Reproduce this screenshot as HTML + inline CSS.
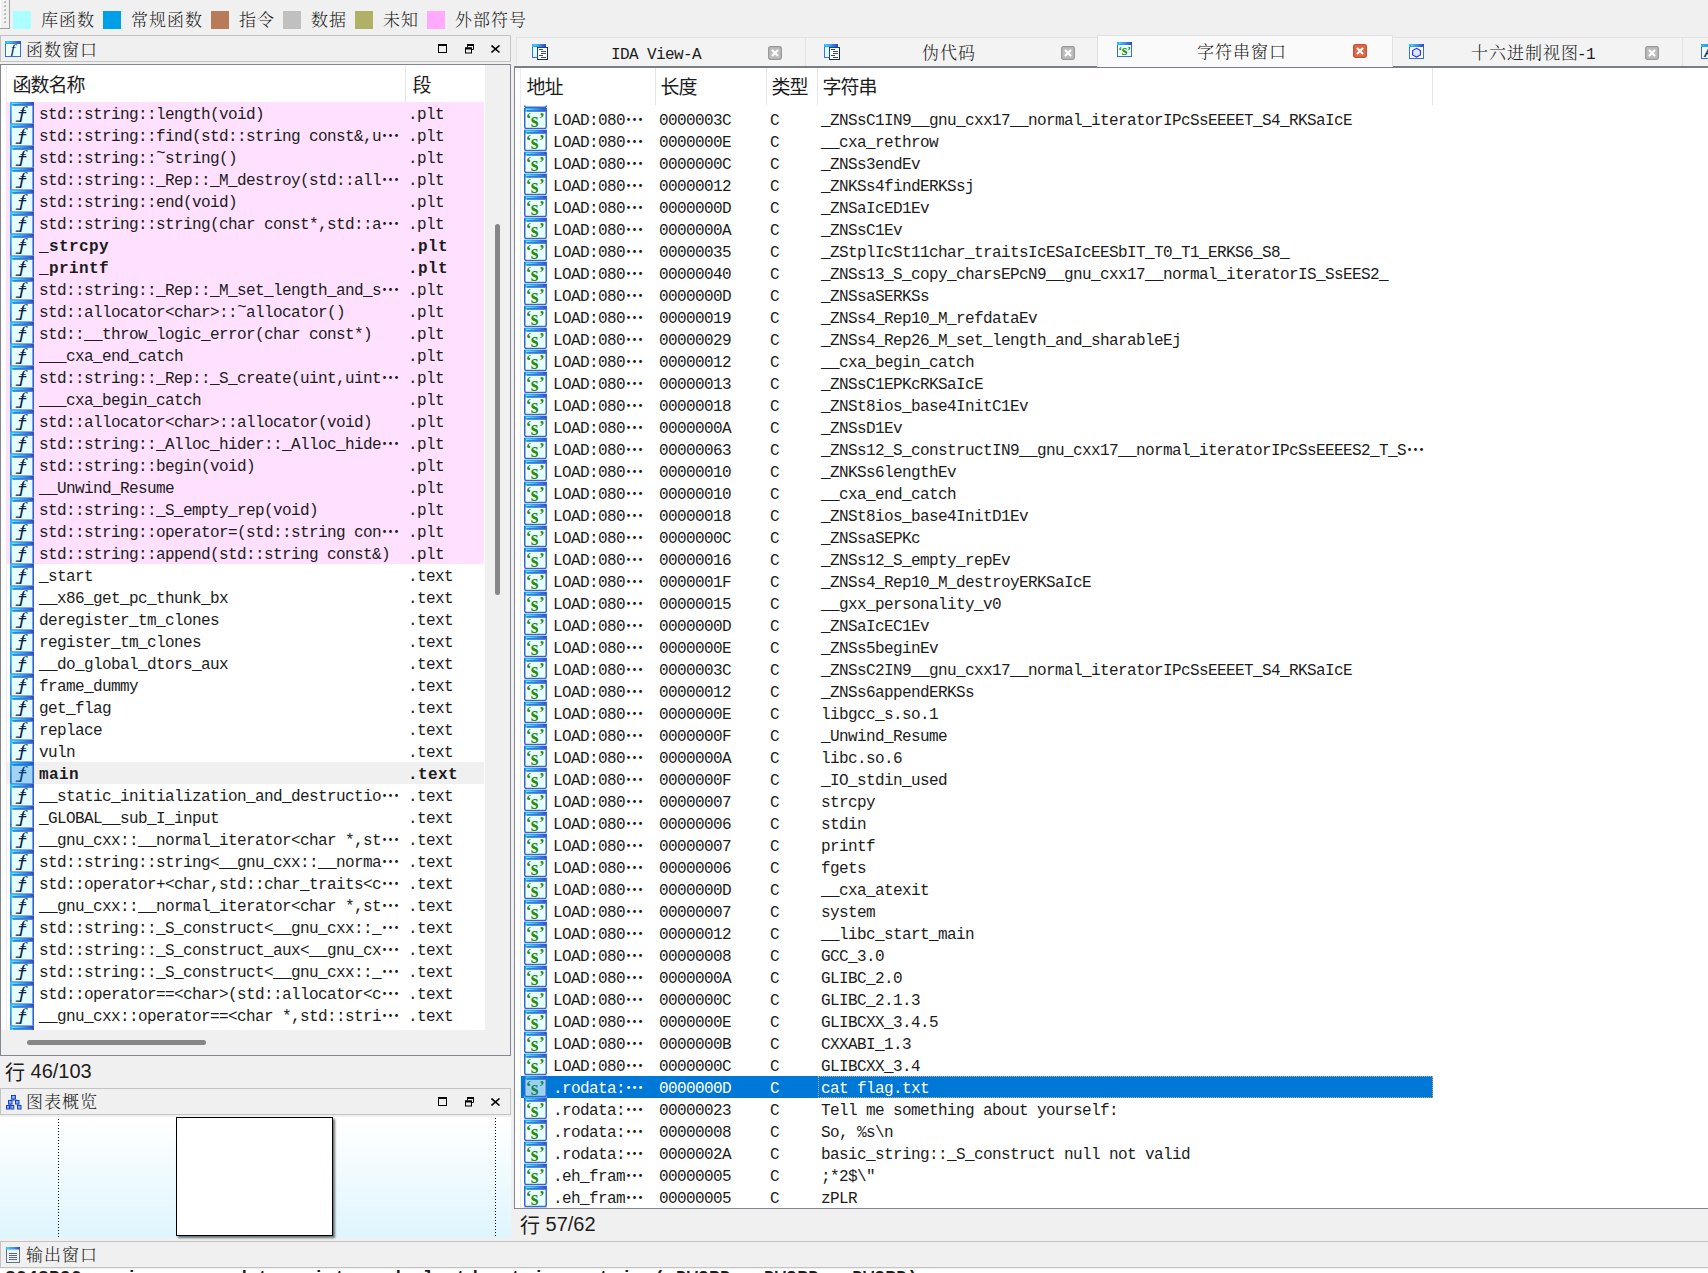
<!DOCTYPE html>
<html lang="zh-CN"><head><meta charset="utf-8"><title>IDA</title>
<style>
*{box-sizing:border-box;margin:0;padding:0}
html,body{width:1708px;height:1273px;overflow:hidden;background:#f0f0f0}
body{position:relative;font-family:"Liberation Mono","Noto Sans CJK SC",monospace;color:#1c1c1c;font-size:16px;letter-spacing:-0.6px}
.abs,body>div,body>span{position:absolute}
.sf{letter-spacing:1px;font-family:"Liberation Serif","Noto Serif CJK SC",serif;font-size:17px;line-height:22px;white-space:nowrap;font-weight:300}
.ss2{letter-spacing:0;font-family:"Liberation Sans","Noto Sans CJK SC",sans-serif;font-size:18px;line-height:24px;white-space:nowrap}
.mono{font-family:"Liberation Mono","Noto Sans CJK SC",monospace;font-size:16px;letter-spacing:-0.6px;white-space:nowrap}
i.el{font-style:normal;font-weight:bold;letter-spacing:0;font-family:"Noto Sans CJK SC",sans-serif;font-size:18px;line-height:0;position:relative;top:0.5px;left:0.5px}
/* legend */
.sw{position:absolute;top:11px;width:18px;height:18px}
.lg{position:absolute;top:10px}
/* dock titles */
.dock{position:absolute;left:0;width:511px;height:27px;border:1px solid #c3c3c3;background:#f0f0f0}
.dock .sf{position:absolute;left:25px;top:4px}
.dock svg{position:absolute}
/* left list */
#lpanel{left:0;top:64px;width:511px;height:992px;border:1px solid #828790;background:#f0f0f0}
#lwhite{left:1px;top:65px;width:484px;height:965px;background:#fff}
#flist,#slist{position:absolute;left:0;top:0}
.fr{position:absolute;left:7px;width:477px;height:22px;line-height:22px;white-space:nowrap}
.fr.pk{background:#ffe1ff}
.fr.cur{background:#f0f0f0}
.fr.b{font-weight:bold;letter-spacing:0.4px}
.fi{position:absolute;left:3px;top:0;width:24px;height:22px}
.fn{position:absolute;left:32px;top:2px}
.fs{position:absolute;left:401px;top:2px}
.hsep{position:absolute;width:1px;background:#e5e5e5}
/* right list */
#rpanel{left:514px;top:66px;width:1200px;height:1143px;border:1px solid #828790;border-top:2px solid #7a7f87;background:#fff}
.sr{position:absolute;left:521px;width:912px;height:22px;line-height:22px;white-space:nowrap}
.sr.sel{background:#0078d7;color:#fff}
.sr.sel:after{content:"";box-sizing:border-box;position:absolute;left:297px;top:0;width:615px;height:22px;border:1px dotted #f0b27c;opacity:.85}
.si{position:absolute;left:3px;top:0;width:24px;height:22px}
.sa{position:absolute;left:32px;top:2px}
.sl{position:absolute;left:138px;top:2px}
.st{position:absolute;left:249px;top:2px}
.ss{position:absolute;left:300px;top:2px}
/* tabs */
.tab{position:absolute;top:37px;height:29px;background:#f3f3f3;border:1px solid #e2e2e2;border-bottom:none}
.tab.act{top:35px;height:32px;background:#fafafa;border-color:#e0e0e0}
.tab .sf{position:absolute;top:5px}
.tab svg{position:absolute}

.ss2.hd{font-size:19px;letter-spacing:-1px}
i.tl{font-style:normal;position:relative;top:-5px}

</style></head><body>
<svg width="0" height="0" style="position:absolute">
<defs>
<linearGradient id="gtb" x1="0" y1="0" x2="1" y2="0"><stop offset="0" stop-color="#22c2fa"/><stop offset="0.550" stop-color="#3a8ce0"/><stop offset="1" stop-color="#3444c6"/></linearGradient>
<linearGradient id="gth" x1="0" y1="0" x2="1" y2="0"><stop offset="0" stop-color="#62f2ff"/><stop offset="0.600" stop-color="#3c96e2"/><stop offset="1" stop-color="#3258cc"/></linearGradient>
<linearGradient id="glb" x1="0" y1="0" x2="0" y2="1"><stop offset="0" stop-color="#22b8f6"/><stop offset="1" stop-color="#3270d8"/></linearGradient>
<g id="ficon">
<rect x="0" y="0" width="24" height="22" fill="#fff"/>
<rect x="2.500" y="4.500" width="19.500" height="16.500" fill="#e4feff"/>
<rect x="0" y="0" width="1.700" height="22" fill="url(#glb)"/>
<rect x="22.400" y="0" width="1.600" height="22" fill="#3262d2"/>
<rect x="0" y="0" width="24" height="3.600" fill="url(#gtb)"/>
<rect x="2" y="0.800" width="20" height="1.200" fill="url(#gth)"/>
<rect x="3" y="2.300" width="19.500" height="1.300" fill="#2b6fe0"/>
<rect x="0" y="21.200" width="24" height="0.800" fill="#6a94e2"/>
<text transform="translate(9.300,16) scale(1.25,1)" font-family="Liberation Serif,serif" font-style="italic" font-weight="normal" letter-spacing="0" font-size="17" fill="#0e1e48">f</text>
<path d="M9.300 10.700h6.600M6.300 19.200h3.200" stroke="#0e1e48" stroke-width="1.300" stroke-linecap="round" fill="none"/>
</g>
<g id="sicon">
<rect x="0" y="0" width="23" height="21" fill="#fff"/>
<rect x="2.500" y="4.500" width="18" height="14.500" fill="#e6ffff"/>
<rect x="0" y="0" width="23" height="3.600" fill="url(#gtb)"/>
<rect x="2" y="0.800" width="19" height="1.200" fill="url(#gth)"/>
<rect x="3" y="2.300" width="18" height="1.300" fill="#2b6fe0"/>
<path d="M0.750 0v19a1.500 1.500 0 0 0 1.500 1.500h18.500a1.500 1.500 0 0 0 1.500 -1.500v-19" fill="none" stroke="#3268d2" stroke-width="1.500"/>
<rect x="0" y="21.200" width="23" height="0.800" fill="#b4c6ee"/>
<g font-family="Liberation Serif,serif" font-weight="bold" fill="#2f8a08"><text x="1.800" y="16.300" font-size="17">‘</text><text x="6.800" y="18.700" font-size="20">s</text><text x="15" y="16.300" font-size="17">’</text></g>
</g>
<g id="btnmax"><rect x="0.500" y="1" width="8" height="7.500" fill="none" stroke="#000" stroke-width="1"/><rect x="0" y="0" width="9" height="2" fill="#000"/></g>
<g id="btnfloat"><path d="M2.5 3.5v-3h6v5h-2.5" fill="none" stroke="#000" stroke-width="1"/><rect x="2" y="0" width="7" height="2" fill="#000"/><rect x="0.5" y="4" width="6" height="5" fill="#f0f0f0" stroke="#000" stroke-width="1"/><rect x="0" y="3.5" width="7" height="2" fill="#000"/></g>
<g id="btnx"><path d="M0.5 0.5l8 7M8.5 0.5l-8 7" stroke="#000" stroke-width="1.6" fill="none"/></g>
<g id="tabx"><rect x="0.650" y="0.650" width="12.700" height="12.700" rx="1.800" fill="#bcbcbc" stroke="#999" stroke-width="1.300"/><path d="M4 4l6 6M10 4l-6 6" stroke="#fff" stroke-width="2.100"/></g>
<g id="tabxr"><rect x="0.650" y="0.650" width="12.700" height="12.700" rx="1.800" fill="#e0694a" stroke="#c9502f" stroke-width="1.300"/><path d="M4 4l6 6M10 4l-6 6" stroke="#fff" stroke-width="2.100"/></g>
<linearGradient id="gbody" x1="0" y1="0" x2="1" y2="1"><stop offset="0" stop-color="#f4ffff"/><stop offset="1" stop-color="#cfeeff"/></linearGradient>
<g id="docicon"><rect x="0.500" y="0.500" width="13" height="13" fill="url(#gbody)" stroke="#3476dc"/><rect x="0" y="0" width="14" height="3" fill="url(#gtb)"/><rect x="1.500" y="0.600" width="11" height="1" fill="url(#gth)"/><rect x="5.500" y="3.500" width="10" height="12" fill="#fff" stroke="#14478c"/><path d="M15.500 3.500v12h-10" fill="none" stroke="#083068"/><path d="M7 5.500h4M9 7.500h5M9 9.500h5M7 11.500h4M9 13.500h5" stroke="#444c56" stroke-width="1"/></g>
<g id="hexicon"><rect x="0.500" y="0.500" width="14" height="14" fill="#fff" stroke="#3470da"/><rect x="0" y="0" width="15" height="3" fill="url(#gtb)"/><rect x="1.500" y="0.600" width="12" height="1" fill="url(#gth)"/><path d="M7.500 4.300l3.900 2.200v4.400l-3.900 2.200l-3.900 -2.200v-4.400z" fill="#dce9ff" stroke="#2a2cff" stroke-width="1.100"/></g>
<g id="smini"><rect x="0.500" y="0.500" width="14" height="14" fill="#fff" stroke="#3470da"/><rect x="2" y="4" width="11" height="9.500" fill="#e6ffff"/><rect x="0" y="0" width="15" height="3" fill="url(#gtb)"/><rect x="1.500" y="0.600" width="12" height="1" fill="url(#gth)"/><g font-family="Liberation Serif,serif" font-weight="bold" fill="#2f8a08" letter-spacing="0"><text x="1.600" y="12" font-size="11">‘</text><text x="4.700" y="12.800" font-size="14.500">s</text><text x="10.300" y="12" font-size="11">’</text></g></g>
</defs>
</svg>
<!-- toolbar grip + legend -->
<div style="left:0;top:0;width:1px;height:28px;background:#fff"></div>
<div style="left:3px;top:0;width:2px;height:23px;background:repeating-linear-gradient(#fcfcfc 0 2px,#f0f0f0 2px 4px)"></div>
<div style="left:4px;top:1px;width:2px;height:22px;background:repeating-linear-gradient(#bcbcbc 0 2px,transparent 2px 4px)"></div>
<div style="left:0;top:28px;width:10px;height:1px;background:#a0a0a0"></div>
<div style="left:9px;top:0;width:1px;height:29px;background:#a0a0a0"></div>
<div class="sw" style="left:13px;background:#aaffff"></div><span class="sf lg" style="left:41px">库函数</span>
<div class="sw" style="left:103px;background:#00a0e8"></div><span class="sf lg" style="left:131px">常规函数</span>
<div class="sw" style="left:211px;background:#b97a57"></div><span class="sf lg" style="left:239px">指令</span>
<div class="sw" style="left:283px;background:#c0c0c0"></div><span class="sf lg" style="left:311px">数据</span>
<div class="sw" style="left:355px;background:#b0b066"></div><span class="sf lg" style="left:383px">未知</span>
<div class="sw" style="left:427px;background:#ffaaff"></div><span class="sf lg" style="left:455px">外部符号</span>

<!-- functions window title -->
<div class="dock" style="top:35px">
<svg width="16" height="16" style="left:4px;top:5px"><rect x="0.500" y="0.500" width="15" height="15" fill="#fff" stroke="#3470da"/><rect x="2" y="4" width="12" height="10.500" fill="#e6ffff"/><rect x="0" y="0" width="16" height="3" fill="url(#gtb)"/><rect x="1.500" y="0.600" width="13" height="1" fill="url(#gth)"/><text transform="translate(5.800,11.700) scale(1.3,1)" font-family="Liberation Serif,serif" font-style="italic" font-size="12.500" fill="#0e1e48">f</text></svg>
<span class="sf">函数窗口</span>
<svg width="10" height="10" style="left:437px;top:8px"><use href="#btnmax"/></svg>
<svg width="10" height="10" style="left:464px;top:8px"><use href="#btnfloat"/></svg>
<svg width="10" height="10" style="left:490px;top:9px"><use href="#btnx"/></svg>
</div>

<!-- functions list frame -->
<div id="lpanel"></div>
<div id="lwhite"></div>
<span class="ss2 hd" style="left:12.500px;top:74px">函数名称</span>
<span class="ss2 hd" style="left:412.500px;top:74px">段</span>
<div class="hsep" style="left:405px;top:66px;height:36px"></div>
<div class="hsep" style="left:6px;top:65px;height:965px;background:#ebebeb"></div>

<!-- tabs -->
<div class="tab" style="left:516px;width:290px"><svg width="17" height="17" style="left:15px;top:6px"><use href="#docicon"/></svg><span class="sf" style="left:94px;top:6px;font-family:'Liberation Mono',monospace;font-size:16px;letter-spacing:-0.600px;font-weight:400">IDA View-A</span><svg width="14" height="14" style="left:251px;top:8px"><use href="#tabx"/></svg></div>
<div class="tab" style="left:806px;width:292px;border-left:none"><svg width="17" height="17" style="left:18px;top:6px"><use href="#docicon"/></svg><span class="sf" style="left:116px">伪代码</span><svg width="14" height="14" style="left:255px;top:8px"><use href="#tabx"/></svg></div>
<div class="tab" style="left:1393px;width:290px;border-left:none"><svg width="15" height="15" style="left:16px;top:6px"><use href="#hexicon"/></svg><span class="sf" style="left:78px">十六进制视图<span style="font-family:'Liberation Mono',monospace;font-size:16px;letter-spacing:-0.600px;margin-left:-2px;font-weight:400">-1</span></span><svg width="14" height="14" style="left:252px;top:8px"><use href="#tabx"/></svg></div>
<div class="tab" style="left:1683px;width:30px;border-left:none"><svg width="15" height="15" style="left:18px;top:6px"><rect x="0.500" y="0.500" width="14" height="14" fill="#eef6ff" stroke="#3470da"/><rect x="0" y="0" width="15" height="3" fill="url(#gtb)"/><text x="3" y="13" font-family="Liberation Sans,sans-serif" font-weight="bold" font-style="italic" font-size="12" fill="#0a2a5a">A</text></svg></div>

<!-- strings panel frame -->
<div id="rpanel"></div>
<div class="tab act" style="left:1097px;width:296px"><svg width="15" height="15" style="left:19px;top:6px"><use href="#smini"/></svg><span class="sf" style="left:99px;top:6px">字符串窗口</span><svg width="14" height="14" style="left:255px;top:8px"><use href="#tabxr"/></svg></div>
<svg id="ears" class="abs" width="23" height="3" style="left:524px;top:104.500px"><path d="M0.750 0.500v0.500a1.200 1.200 0 0 0 1.200 1.200h19.100a1.200 1.200 0 0 0 1.200 -1.200v-0.500" fill="none" stroke="#3268d2" stroke-width="1.500"/></svg>
<span class="ss2 hd" style="left:526.5px;top:76px">地址</span>
<span class="ss2 hd" style="left:660.5px;top:76px">长度</span>
<span class="ss2 hd" style="left:771.5px;top:76px">类型</span>
<span class="ss2 hd" style="left:822.5px;top:76px">字符串</span>
<div class="hsep" style="left:520px;top:68px;height:1140px;background:#ebebeb"></div>
<div class="hsep" style="left:655px;top:68px;height:37px"></div>
<div class="hsep" style="left:766px;top:68px;height:37px"></div>
<div class="hsep" style="left:817px;top:68px;height:37px"></div>
<div class="hsep" style="left:1432px;top:68px;height:37px"></div>
<div id="flist">
<div class="fr pk" style="top:102px"><span class="fi"><svg width="24" height="22"><use href="#ficon"/></svg></span><span class="fn">std::string::length(void)</span><span class="fs">.plt</span></div>
<div class="fr pk" style="top:124px"><span class="fi"><svg width="24" height="22"><use href="#ficon"/></svg></span><span class="fn">std::string::find(std::string const&amp;,u<i class="el">…</i></span><span class="fs">.plt</span></div>
<div class="fr pk" style="top:146px"><span class="fi"><svg width="24" height="22"><use href="#ficon"/></svg></span><span class="fn">std::string::<i class="tl">~</i>string()</span><span class="fs">.plt</span></div>
<div class="fr pk" style="top:168px"><span class="fi"><svg width="24" height="22"><use href="#ficon"/></svg></span><span class="fn">std::string::_Rep::_M_destroy(std::all<i class="el">…</i></span><span class="fs">.plt</span></div>
<div class="fr pk" style="top:190px"><span class="fi"><svg width="24" height="22"><use href="#ficon"/></svg></span><span class="fn">std::string::end(void)</span><span class="fs">.plt</span></div>
<div class="fr pk" style="top:212px"><span class="fi"><svg width="24" height="22"><use href="#ficon"/></svg></span><span class="fn">std::string::string(char const*,std::a<i class="el">…</i></span><span class="fs">.plt</span></div>
<div class="fr pk b" style="top:234px"><span class="fi"><svg width="24" height="22"><use href="#ficon"/></svg></span><span class="fn">_strcpy</span><span class="fs">.plt</span></div>
<div class="fr pk b" style="top:256px"><span class="fi"><svg width="24" height="22"><use href="#ficon"/></svg></span><span class="fn">_printf</span><span class="fs">.plt</span></div>
<div class="fr pk" style="top:278px"><span class="fi"><svg width="24" height="22"><use href="#ficon"/></svg></span><span class="fn">std::string::_Rep::_M_set_length_and_s<i class="el">…</i></span><span class="fs">.plt</span></div>
<div class="fr pk" style="top:300px"><span class="fi"><svg width="24" height="22"><use href="#ficon"/></svg></span><span class="fn">std::allocator&lt;char&gt;::<i class="tl">~</i>allocator()</span><span class="fs">.plt</span></div>
<div class="fr pk" style="top:322px"><span class="fi"><svg width="24" height="22"><use href="#ficon"/></svg></span><span class="fn">std::__throw_logic_error(char const*)</span><span class="fs">.plt</span></div>
<div class="fr pk" style="top:344px"><span class="fi"><svg width="24" height="22"><use href="#ficon"/></svg></span><span class="fn">___cxa_end_catch</span><span class="fs">.plt</span></div>
<div class="fr pk" style="top:366px"><span class="fi"><svg width="24" height="22"><use href="#ficon"/></svg></span><span class="fn">std::string::_Rep::_S_create(uint,uint<i class="el">…</i></span><span class="fs">.plt</span></div>
<div class="fr pk" style="top:388px"><span class="fi"><svg width="24" height="22"><use href="#ficon"/></svg></span><span class="fn">___cxa_begin_catch</span><span class="fs">.plt</span></div>
<div class="fr pk" style="top:410px"><span class="fi"><svg width="24" height="22"><use href="#ficon"/></svg></span><span class="fn">std::allocator&lt;char&gt;::allocator(void)</span><span class="fs">.plt</span></div>
<div class="fr pk" style="top:432px"><span class="fi"><svg width="24" height="22"><use href="#ficon"/></svg></span><span class="fn">std::string::_Alloc_hider::_Alloc_hide<i class="el">…</i></span><span class="fs">.plt</span></div>
<div class="fr pk" style="top:454px"><span class="fi"><svg width="24" height="22"><use href="#ficon"/></svg></span><span class="fn">std::string::begin(void)</span><span class="fs">.plt</span></div>
<div class="fr pk" style="top:476px"><span class="fi"><svg width="24" height="22"><use href="#ficon"/></svg></span><span class="fn">__Unwind_Resume</span><span class="fs">.plt</span></div>
<div class="fr pk" style="top:498px"><span class="fi"><svg width="24" height="22"><use href="#ficon"/></svg></span><span class="fn">std::string::_S_empty_rep(void)</span><span class="fs">.plt</span></div>
<div class="fr pk" style="top:520px"><span class="fi"><svg width="24" height="22"><use href="#ficon"/></svg></span><span class="fn">std::string::operator=(std::string con<i class="el">…</i></span><span class="fs">.plt</span></div>
<div class="fr pk" style="top:542px"><span class="fi"><svg width="24" height="22"><use href="#ficon"/></svg></span><span class="fn">std::string::append(std::string const&amp;)</span><span class="fs">.plt</span></div>
<div class="fr" style="top:564px"><span class="fi"><svg width="24" height="22"><use href="#ficon"/></svg></span><span class="fn">_start</span><span class="fs">.text</span></div>
<div class="fr" style="top:586px"><span class="fi"><svg width="24" height="22"><use href="#ficon"/></svg></span><span class="fn">__x86_get_pc_thunk_bx</span><span class="fs">.text</span></div>
<div class="fr" style="top:608px"><span class="fi"><svg width="24" height="22"><use href="#ficon"/></svg></span><span class="fn">deregister_tm_clones</span><span class="fs">.text</span></div>
<div class="fr" style="top:630px"><span class="fi"><svg width="24" height="22"><use href="#ficon"/></svg></span><span class="fn">register_tm_clones</span><span class="fs">.text</span></div>
<div class="fr" style="top:652px"><span class="fi"><svg width="24" height="22"><use href="#ficon"/></svg></span><span class="fn">__do_global_dtors_aux</span><span class="fs">.text</span></div>
<div class="fr" style="top:674px"><span class="fi"><svg width="24" height="22"><use href="#ficon"/></svg></span><span class="fn">frame_dummy</span><span class="fs">.text</span></div>
<div class="fr" style="top:696px"><span class="fi"><svg width="24" height="22"><use href="#ficon"/></svg></span><span class="fn">get_flag</span><span class="fs">.text</span></div>
<div class="fr" style="top:718px"><span class="fi"><svg width="24" height="22"><use href="#ficon"/></svg></span><span class="fn">replace</span><span class="fs">.text</span></div>
<div class="fr" style="top:740px"><span class="fi"><svg width="24" height="22"><use href="#ficon"/></svg></span><span class="fn">vuln</span><span class="fs">.text</span></div>
<div class="fr b cur" style="top:762px"><span class="fi"><svg width="24" height="22"><use href="#ficon"/><rect width="24" height="22" fill="#0078d7" fill-opacity=".3"/></svg></span><span class="fn">main</span><span class="fs">.text</span></div>
<div class="fr" style="top:784px"><span class="fi"><svg width="24" height="22"><use href="#ficon"/></svg></span><span class="fn">__static_initialization_and_destructio<i class="el">…</i></span><span class="fs">.text</span></div>
<div class="fr" style="top:806px"><span class="fi"><svg width="24" height="22"><use href="#ficon"/></svg></span><span class="fn">_GLOBAL__sub_I_input</span><span class="fs">.text</span></div>
<div class="fr" style="top:828px"><span class="fi"><svg width="24" height="22"><use href="#ficon"/></svg></span><span class="fn">__gnu_cxx::__normal_iterator&lt;char *,st<i class="el">…</i></span><span class="fs">.text</span></div>
<div class="fr" style="top:850px"><span class="fi"><svg width="24" height="22"><use href="#ficon"/></svg></span><span class="fn">std::string::string&lt;__gnu_cxx::__norma<i class="el">…</i></span><span class="fs">.text</span></div>
<div class="fr" style="top:872px"><span class="fi"><svg width="24" height="22"><use href="#ficon"/></svg></span><span class="fn">std::operator+&lt;char,std::char_traits&lt;c<i class="el">…</i></span><span class="fs">.text</span></div>
<div class="fr" style="top:894px"><span class="fi"><svg width="24" height="22"><use href="#ficon"/></svg></span><span class="fn">__gnu_cxx::__normal_iterator&lt;char *,st<i class="el">…</i></span><span class="fs">.text</span></div>
<div class="fr" style="top:916px"><span class="fi"><svg width="24" height="22"><use href="#ficon"/></svg></span><span class="fn">std::string::_S_construct&lt;__gnu_cxx::_<i class="el">…</i></span><span class="fs">.text</span></div>
<div class="fr" style="top:938px"><span class="fi"><svg width="24" height="22"><use href="#ficon"/></svg></span><span class="fn">std::string::_S_construct_aux&lt;__gnu_cx<i class="el">…</i></span><span class="fs">.text</span></div>
<div class="fr" style="top:960px"><span class="fi"><svg width="24" height="22"><use href="#ficon"/></svg></span><span class="fn">std::string::_S_construct&lt;__gnu_cxx::_<i class="el">…</i></span><span class="fs">.text</span></div>
<div class="fr" style="top:982px"><span class="fi"><svg width="24" height="22"><use href="#ficon"/></svg></span><span class="fn">std::operator==&lt;char&gt;(std::allocator&lt;c<i class="el">…</i></span><span class="fs">.text</span></div>
<div class="fr" style="top:1004px"><span class="fi"><svg width="24" height="22"><use href="#ficon"/></svg></span><span class="fn">__gnu_cxx::operator==&lt;char *,std::stri<i class="el">…</i></span><span class="fs">.text</span></div>
</div>
<div id="slist">
<div class="sr" style="top:108px"><span class="si"><svg width="24" height="22"><use href="#sicon"/></svg></span><span class="sa">LOAD:080<i class="el">…</i></span><span class="sl">0000003C</span><span class="st">C</span><span class="ss">_ZNSsC1IN9__gnu_cxx17__normal_iteratorIPcSsEEEET_S4_RKSaIcE</span></div>
<div class="sr" style="top:130px"><span class="si"><svg width="24" height="22"><use href="#sicon"/></svg></span><span class="sa">LOAD:080<i class="el">…</i></span><span class="sl">0000000E</span><span class="st">C</span><span class="ss">__cxa_rethrow</span></div>
<div class="sr" style="top:152px"><span class="si"><svg width="24" height="22"><use href="#sicon"/></svg></span><span class="sa">LOAD:080<i class="el">…</i></span><span class="sl">0000000C</span><span class="st">C</span><span class="ss">_ZNSs3endEv</span></div>
<div class="sr" style="top:174px"><span class="si"><svg width="24" height="22"><use href="#sicon"/></svg></span><span class="sa">LOAD:080<i class="el">…</i></span><span class="sl">00000012</span><span class="st">C</span><span class="ss">_ZNKSs4findERKSsj</span></div>
<div class="sr" style="top:196px"><span class="si"><svg width="24" height="22"><use href="#sicon"/></svg></span><span class="sa">LOAD:080<i class="el">…</i></span><span class="sl">0000000D</span><span class="st">C</span><span class="ss">_ZNSaIcED1Ev</span></div>
<div class="sr" style="top:218px"><span class="si"><svg width="24" height="22"><use href="#sicon"/></svg></span><span class="sa">LOAD:080<i class="el">…</i></span><span class="sl">0000000A</span><span class="st">C</span><span class="ss">_ZNSsC1Ev</span></div>
<div class="sr" style="top:240px"><span class="si"><svg width="24" height="22"><use href="#sicon"/></svg></span><span class="sa">LOAD:080<i class="el">…</i></span><span class="sl">00000035</span><span class="st">C</span><span class="ss">_ZStplIcSt11char_traitsIcESaIcEESbIT_T0_T1_ERKS6_S8_</span></div>
<div class="sr" style="top:262px"><span class="si"><svg width="24" height="22"><use href="#sicon"/></svg></span><span class="sa">LOAD:080<i class="el">…</i></span><span class="sl">00000040</span><span class="st">C</span><span class="ss">_ZNSs13_S_copy_charsEPcN9__gnu_cxx17__normal_iteratorIS_SsEES2_</span></div>
<div class="sr" style="top:284px"><span class="si"><svg width="24" height="22"><use href="#sicon"/></svg></span><span class="sa">LOAD:080<i class="el">…</i></span><span class="sl">0000000D</span><span class="st">C</span><span class="ss">_ZNSsaSERKSs</span></div>
<div class="sr" style="top:306px"><span class="si"><svg width="24" height="22"><use href="#sicon"/></svg></span><span class="sa">LOAD:080<i class="el">…</i></span><span class="sl">00000019</span><span class="st">C</span><span class="ss">_ZNSs4_Rep10_M_refdataEv</span></div>
<div class="sr" style="top:328px"><span class="si"><svg width="24" height="22"><use href="#sicon"/></svg></span><span class="sa">LOAD:080<i class="el">…</i></span><span class="sl">00000029</span><span class="st">C</span><span class="ss">_ZNSs4_Rep26_M_set_length_and_sharableEj</span></div>
<div class="sr" style="top:350px"><span class="si"><svg width="24" height="22"><use href="#sicon"/></svg></span><span class="sa">LOAD:080<i class="el">…</i></span><span class="sl">00000012</span><span class="st">C</span><span class="ss">__cxa_begin_catch</span></div>
<div class="sr" style="top:372px"><span class="si"><svg width="24" height="22"><use href="#sicon"/></svg></span><span class="sa">LOAD:080<i class="el">…</i></span><span class="sl">00000013</span><span class="st">C</span><span class="ss">_ZNSsC1EPKcRKSaIcE</span></div>
<div class="sr" style="top:394px"><span class="si"><svg width="24" height="22"><use href="#sicon"/></svg></span><span class="sa">LOAD:080<i class="el">…</i></span><span class="sl">00000018</span><span class="st">C</span><span class="ss">_ZNSt8ios_base4InitC1Ev</span></div>
<div class="sr" style="top:416px"><span class="si"><svg width="24" height="22"><use href="#sicon"/></svg></span><span class="sa">LOAD:080<i class="el">…</i></span><span class="sl">0000000A</span><span class="st">C</span><span class="ss">_ZNSsD1Ev</span></div>
<div class="sr" style="top:438px"><span class="si"><svg width="24" height="22"><use href="#sicon"/></svg></span><span class="sa">LOAD:080<i class="el">…</i></span><span class="sl">00000063</span><span class="st">C</span><span class="ss">_ZNSs12_S_constructIN9__gnu_cxx17__normal_iteratorIPcSsEEEES2_T_S<i class="el">…</i></span></div>
<div class="sr" style="top:460px"><span class="si"><svg width="24" height="22"><use href="#sicon"/></svg></span><span class="sa">LOAD:080<i class="el">…</i></span><span class="sl">00000010</span><span class="st">C</span><span class="ss">_ZNKSs6lengthEv</span></div>
<div class="sr" style="top:482px"><span class="si"><svg width="24" height="22"><use href="#sicon"/></svg></span><span class="sa">LOAD:080<i class="el">…</i></span><span class="sl">00000010</span><span class="st">C</span><span class="ss">__cxa_end_catch</span></div>
<div class="sr" style="top:504px"><span class="si"><svg width="24" height="22"><use href="#sicon"/></svg></span><span class="sa">LOAD:080<i class="el">…</i></span><span class="sl">00000018</span><span class="st">C</span><span class="ss">_ZNSt8ios_base4InitD1Ev</span></div>
<div class="sr" style="top:526px"><span class="si"><svg width="24" height="22"><use href="#sicon"/></svg></span><span class="sa">LOAD:080<i class="el">…</i></span><span class="sl">0000000C</span><span class="st">C</span><span class="ss">_ZNSsaSEPKc</span></div>
<div class="sr" style="top:548px"><span class="si"><svg width="24" height="22"><use href="#sicon"/></svg></span><span class="sa">LOAD:080<i class="el">…</i></span><span class="sl">00000016</span><span class="st">C</span><span class="ss">_ZNSs12_S_empty_repEv</span></div>
<div class="sr" style="top:570px"><span class="si"><svg width="24" height="22"><use href="#sicon"/></svg></span><span class="sa">LOAD:080<i class="el">…</i></span><span class="sl">0000001F</span><span class="st">C</span><span class="ss">_ZNSs4_Rep10_M_destroyERKSaIcE</span></div>
<div class="sr" style="top:592px"><span class="si"><svg width="24" height="22"><use href="#sicon"/></svg></span><span class="sa">LOAD:080<i class="el">…</i></span><span class="sl">00000015</span><span class="st">C</span><span class="ss">__gxx_personality_v0</span></div>
<div class="sr" style="top:614px"><span class="si"><svg width="24" height="22"><use href="#sicon"/></svg></span><span class="sa">LOAD:080<i class="el">…</i></span><span class="sl">0000000D</span><span class="st">C</span><span class="ss">_ZNSaIcEC1Ev</span></div>
<div class="sr" style="top:636px"><span class="si"><svg width="24" height="22"><use href="#sicon"/></svg></span><span class="sa">LOAD:080<i class="el">…</i></span><span class="sl">0000000E</span><span class="st">C</span><span class="ss">_ZNSs5beginEv</span></div>
<div class="sr" style="top:658px"><span class="si"><svg width="24" height="22"><use href="#sicon"/></svg></span><span class="sa">LOAD:080<i class="el">…</i></span><span class="sl">0000003C</span><span class="st">C</span><span class="ss">_ZNSsC2IN9__gnu_cxx17__normal_iteratorIPcSsEEEET_S4_RKSaIcE</span></div>
<div class="sr" style="top:680px"><span class="si"><svg width="24" height="22"><use href="#sicon"/></svg></span><span class="sa">LOAD:080<i class="el">…</i></span><span class="sl">00000012</span><span class="st">C</span><span class="ss">_ZNSs6appendERKSs</span></div>
<div class="sr" style="top:702px"><span class="si"><svg width="24" height="22"><use href="#sicon"/></svg></span><span class="sa">LOAD:080<i class="el">…</i></span><span class="sl">0000000E</span><span class="st">C</span><span class="ss">libgcc_s.so.1</span></div>
<div class="sr" style="top:724px"><span class="si"><svg width="24" height="22"><use href="#sicon"/></svg></span><span class="sa">LOAD:080<i class="el">…</i></span><span class="sl">0000000F</span><span class="st">C</span><span class="ss">_Unwind_Resume</span></div>
<div class="sr" style="top:746px"><span class="si"><svg width="24" height="22"><use href="#sicon"/></svg></span><span class="sa">LOAD:080<i class="el">…</i></span><span class="sl">0000000A</span><span class="st">C</span><span class="ss">libc.so.6</span></div>
<div class="sr" style="top:768px"><span class="si"><svg width="24" height="22"><use href="#sicon"/></svg></span><span class="sa">LOAD:080<i class="el">…</i></span><span class="sl">0000000F</span><span class="st">C</span><span class="ss">_IO_stdin_used</span></div>
<div class="sr" style="top:790px"><span class="si"><svg width="24" height="22"><use href="#sicon"/></svg></span><span class="sa">LOAD:080<i class="el">…</i></span><span class="sl">00000007</span><span class="st">C</span><span class="ss">strcpy</span></div>
<div class="sr" style="top:812px"><span class="si"><svg width="24" height="22"><use href="#sicon"/></svg></span><span class="sa">LOAD:080<i class="el">…</i></span><span class="sl">00000006</span><span class="st">C</span><span class="ss">stdin</span></div>
<div class="sr" style="top:834px"><span class="si"><svg width="24" height="22"><use href="#sicon"/></svg></span><span class="sa">LOAD:080<i class="el">…</i></span><span class="sl">00000007</span><span class="st">C</span><span class="ss">printf</span></div>
<div class="sr" style="top:856px"><span class="si"><svg width="24" height="22"><use href="#sicon"/></svg></span><span class="sa">LOAD:080<i class="el">…</i></span><span class="sl">00000006</span><span class="st">C</span><span class="ss">fgets</span></div>
<div class="sr" style="top:878px"><span class="si"><svg width="24" height="22"><use href="#sicon"/></svg></span><span class="sa">LOAD:080<i class="el">…</i></span><span class="sl">0000000D</span><span class="st">C</span><span class="ss">__cxa_atexit</span></div>
<div class="sr" style="top:900px"><span class="si"><svg width="24" height="22"><use href="#sicon"/></svg></span><span class="sa">LOAD:080<i class="el">…</i></span><span class="sl">00000007</span><span class="st">C</span><span class="ss">system</span></div>
<div class="sr" style="top:922px"><span class="si"><svg width="24" height="22"><use href="#sicon"/></svg></span><span class="sa">LOAD:080<i class="el">…</i></span><span class="sl">00000012</span><span class="st">C</span><span class="ss">__libc_start_main</span></div>
<div class="sr" style="top:944px"><span class="si"><svg width="24" height="22"><use href="#sicon"/></svg></span><span class="sa">LOAD:080<i class="el">…</i></span><span class="sl">00000008</span><span class="st">C</span><span class="ss">GCC_3.0</span></div>
<div class="sr" style="top:966px"><span class="si"><svg width="24" height="22"><use href="#sicon"/></svg></span><span class="sa">LOAD:080<i class="el">…</i></span><span class="sl">0000000A</span><span class="st">C</span><span class="ss">GLIBC_2.0</span></div>
<div class="sr" style="top:988px"><span class="si"><svg width="24" height="22"><use href="#sicon"/></svg></span><span class="sa">LOAD:080<i class="el">…</i></span><span class="sl">0000000C</span><span class="st">C</span><span class="ss">GLIBC_2.1.3</span></div>
<div class="sr" style="top:1010px"><span class="si"><svg width="24" height="22"><use href="#sicon"/></svg></span><span class="sa">LOAD:080<i class="el">…</i></span><span class="sl">0000000E</span><span class="st">C</span><span class="ss">GLIBCXX_3.4.5</span></div>
<div class="sr" style="top:1032px"><span class="si"><svg width="24" height="22"><use href="#sicon"/></svg></span><span class="sa">LOAD:080<i class="el">…</i></span><span class="sl">0000000B</span><span class="st">C</span><span class="ss">CXXABI_1.3</span></div>
<div class="sr" style="top:1054px"><span class="si"><svg width="24" height="22"><use href="#sicon"/></svg></span><span class="sa">LOAD:080<i class="el">…</i></span><span class="sl">0000000C</span><span class="st">C</span><span class="ss">GLIBCXX_3.4</span></div>
<div class="sr sel" style="top:1076px"><span class="si"><svg width="24" height="22"><use href="#sicon"/><rect width="23" height="22" fill="#0078d7" fill-opacity=".33"/></svg></span><span class="sa">.rodata:<i class="el">…</i></span><span class="sl">0000000D</span><span class="st">C</span><span class="ss">cat flag.txt</span></div>
<div class="sr" style="top:1098px"><span class="si"><svg width="24" height="22"><use href="#sicon"/></svg></span><span class="sa">.rodata:<i class="el">…</i></span><span class="sl">00000023</span><span class="st">C</span><span class="ss">Tell me something about yourself:</span></div>
<div class="sr" style="top:1120px"><span class="si"><svg width="24" height="22"><use href="#sicon"/></svg></span><span class="sa">.rodata:<i class="el">…</i></span><span class="sl">00000008</span><span class="st">C</span><span class="ss">So, %s\n</span></div>
<div class="sr" style="top:1142px"><span class="si"><svg width="24" height="22"><use href="#sicon"/></svg></span><span class="sa">.rodata:<i class="el">…</i></span><span class="sl">0000002A</span><span class="st">C</span><span class="ss">basic_string::_S_construct null not valid</span></div>
<div class="sr" style="top:1164px"><span class="si"><svg width="24" height="22"><use href="#sicon"/></svg></span><span class="sa">.eh_fram<i class="el">…</i></span><span class="sl">00000005</span><span class="st">C</span><span class="ss">;*2$\&quot;</span></div>
<div class="sr" style="top:1186px"><span class="si"><svg width="24" height="22"><use href="#sicon"/></svg></span><span class="sa">.eh_fram<i class="el">…</i></span><span class="sl">00000005</span><span class="st">C</span><span class="ss">zPLR</span></div>
</div>
<!-- left scrollbars -->
<div style="left:495px;top:224px;width:5px;height:371px;border-radius:3px;background:#868686"></div>
<div style="left:27px;top:1040px;width:179px;height:5px;border-radius:3px;background:#868686"></div>
<svg class="abs" width="24" height="4" style="left:10px;top:1026px"><use href="#ficon"/></svg>
<span class="ss2" style="left:5px;top:1059px;font-size:20px"><span style="position:relative;top:1.500px">行</span> 46/103</span>

<!-- graph overview -->
<div class="dock" style="top:1088px">
<svg width="16" height="15" style="left:5px;top:6px"><path d="M7.500 4v1.500M4.300 9v1.500M11.300 9v1.500M4 5.200h7.500M2 10.200h4.500M11 10.200h2.500" stroke="#2a50c8" stroke-width="0.800" fill="none"/><g fill="#86b4ff" stroke="#1a3ec2" stroke-width="1"><rect x="5.500" y="0.500" width="4" height="3.500"/><rect x="2.500" y="5.500" width="3.500" height="3.500"/><rect x="9.500" y="5.500" width="3.500" height="3.500"/><rect x="0.500" y="10.500" width="3" height="3.500"/><rect x="4.800" y="10.500" width="3" height="3.500"/><rect x="11.500" y="10.500" width="3.500" height="3.500"/></g></svg>
<span class="sf" style="top:3px">图表概览</span>
<svg width="10" height="10" style="left:437px;top:8px"><use href="#btnmax"/></svg>
<svg width="10" height="10" style="left:464px;top:8px"><use href="#btnfloat"/></svg>
<svg width="10" height="10" style="left:490px;top:9px"><use href="#btnx"/></svg>
</div>
<div style="left:0;top:1117px;width:511px;height:121px;background:linear-gradient(#ffffff 0%,#fdffff 8%,#def5fd 100%)"></div>
<div style="left:58px;top:1119px;width:1px;height:118px;background:repeating-linear-gradient(#000 0 1px,transparent 1px 3px)"></div>
<div style="left:495px;top:1118px;width:1px;height:119px;background:repeating-linear-gradient(#000 0 1px,transparent 1px 3px)"></div>
<div style="left:176px;top:1117px;width:157px;height:119px;background:#fff;border:1px solid #000;box-shadow:2px 2px 2px rgba(0,0,0,.55)"></div>

<!-- right status -->
<span class="ss2" style="left:520px;top:1212px;font-size:20px"><span style="position:relative;top:1.500px">行</span> 57/62</span>

<!-- output window -->
<div class="dock" style="top:1241px;width:1712px">
<svg width="15" height="16" style="left:5px;top:5px"><rect x="0.500" y="0.500" width="13" height="15" fill="#eaf1ff" stroke="#66727e"/><rect x="0" y="0" width="14" height="2.500" fill="url(#gtb)"/><rect x="1" y="0.500" width="12" height="1" fill="url(#gth)"/><path d="M3 6.500h8M3 8.500h8M3 10.500h8M3 12.500h8" stroke="#50565e" stroke-width="0.900"/></svg>
<span class="sf" style="top:2.500px">输出窗口</span>
</div>
<div style="left:0;top:1269px;width:1708px;height:4px;background:#fff"></div>
<span class="mono" style="left:5px;top:1268px;font-weight:bold;font-size:18px;letter-spacing:0.2px;line-height:20px">8048B90: using guessed type int __cdecl std::string::string(_DWORD, _DWORD, _DWORD);</span>
</body></html>
